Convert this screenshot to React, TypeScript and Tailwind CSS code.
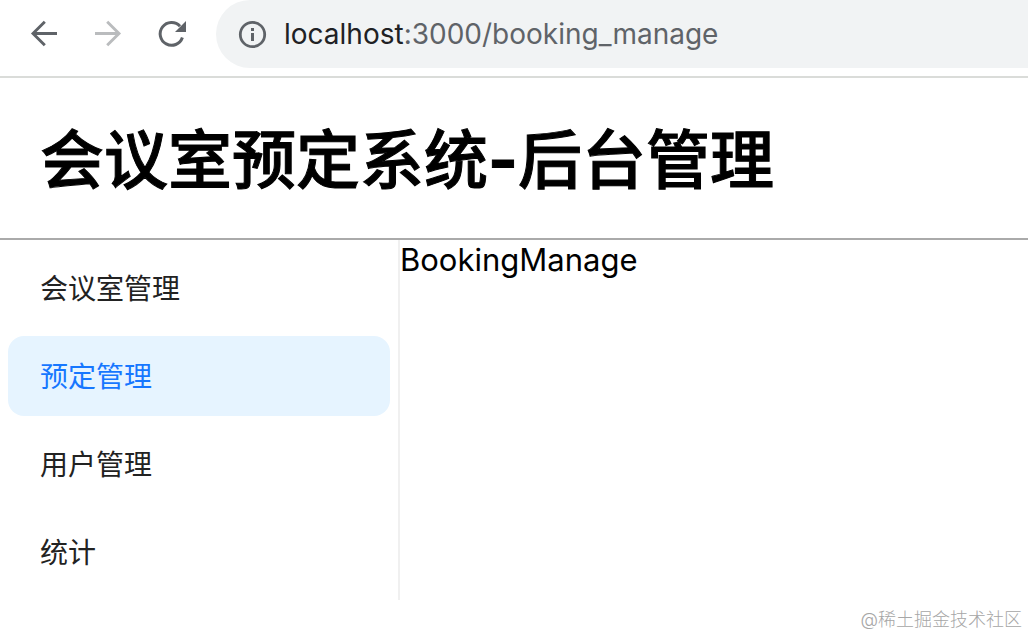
import { useState } from "react";

const menuItems = [
  { label: "会议室管理", path: "/meeting_room_manage" },
  { label: "预定管理", path: "/booking_manage" },
  { label: "用户管理", path: "/user_manage" },
  { label: "统计", path: "/statistics" },
];

function BackIcon() {
  return (
    <svg viewBox="0 0 32 32" className="size-8" fill="none" stroke="currentColor" strokeWidth="2.9" aria-hidden="true">
      <path d="M29 15.5H5M16.8 3.7 5 15.5l11.8 11.8" />
    </svg>
  );
}

function ForwardIcon() {
  return (
    <svg viewBox="0 0 32 32" className="size-8" fill="none" stroke="currentColor" strokeWidth="2.9" aria-hidden="true">
      <path d="M3 15.5h24M15.2 3.7 27 15.5 15.2 27.3" />
    </svg>
  );
}

function ReloadIcon() {
  return (
    <svg viewBox="0 0 32 32" className="size-8" aria-hidden="true">
      <path
        d="M26.4 19.5A11.4 11.4 0 1 1 24 8.2"
        fill="none"
        stroke="currentColor"
        strokeWidth="3"
      />
      <path d="M30 3v11H19z" fill="currentColor" />
    </svg>
  );
}

function InfoIcon() {
  return (
    <svg viewBox="0 0 32 32" className="size-8 shrink-0" aria-hidden="true">
      <circle cx="16.5" cy="16.5" r="12.2" fill="none" stroke="currentColor" strokeWidth="2.8" />
      <path d="M15 10h3v3h-3zM15 15h3v8h-3z" fill="currentColor" />
    </svg>
  );
}

function AddressBar() {
  const [editing, setEditing] = useState(false);
  const [url, setUrl] = useState("localhost:3000/booking_manage");
  const split = url.search(/[:/]/);
  const hostEnd = split < 0 ? url.length : split;

  return (
    <div className="flex h-[68px] min-w-0 flex-1 items-center gap-4 rounded-l-full bg-[#f1f3f4] pl-5 text-[28px] text-[#5f6368]">
      <InfoIcon />
      {editing ? (
        <input
          autoFocus
          aria-label="地址"
          value={url}
          onChange={(event) => setUrl(event.target.value)}
          onBlur={() => setEditing(false)}
          className="min-w-0 flex-1 bg-transparent text-[#202124] outline-none"
        />
      ) : (
        <button type="button" onClick={() => setEditing(true)} className="min-w-0 flex-1 truncate text-left">
          <span className="text-[#202124]">{url.slice(0, hostEnd)}</span>
          <span>{url.slice(hostEnd)}</span>
        </button>
      )}
    </div>
  );
}

export default function App() {
  const [active, setActive] = useState("/booking_manage");

  return (
    <div className="min-h-screen bg-white font-['Inter','Noto_Sans_CJK_SC',sans-serif] text-black">
      <div className="flex h-[78px] items-start border-b-2 border-[#dadcd9]">
        <div className="flex h-[68px] shrink-0 items-center gap-8 pr-7 pl-7 text-[#5f6368]">
          <button type="button" aria-label="后退">
            <BackIcon />
          </button>
          <button type="button" aria-label="前进" disabled className="text-[#babcbe]">
            <ForwardIcon />
          </button>
          <button type="button" aria-label="重新加载">
            <ReloadIcon />
          </button>
        </div>
        <AddressBar />
      </div>

      <header className="flex h-[162px] items-center border-b-2 border-[#aaaaaa] px-10 pt-1">
        <h1 className="text-[64px] leading-none font-medium [-webkit-text-stroke:1px_black]">
          会议室预定系统<span className="font-bold">-</span>后台管理
        </h1>
      </header>

      <div className="flex items-stretch">
        <nav className="flex w-[400px] shrink-0 flex-col gap-2 border-r-2 border-[#f0f0f0] p-2">
          {menuItems.map((item) => (
            <a
              key={item.path}
              href={item.path}
              aria-current={item.path === active ? "page" : undefined}
              onClick={(event) => {
                event.preventDefault();
                setActive(item.path);
              }}
              className={
                item.path === active
                  ? "flex h-20 items-center rounded-2xl bg-[#e6f4ff] px-8 pt-0.5 text-[28px] text-[#1677ff]"
                  : "flex h-20 items-center rounded-2xl px-8 pt-0.5 text-[28px] text-[#222222]"
              }
            >
              {item.label}
            </a>
          ))}
        </nav>
        <main className="min-w-0 flex-1 text-[31px] leading-10">BookingManage</main>
      </div>

      <footer className="flex h-9 items-center justify-end px-1.5 pt-1 text-lg font-light text-[#a6a6a6]">
        @稀土掘金技术社区
      </footer>
    </div>
  );
}
